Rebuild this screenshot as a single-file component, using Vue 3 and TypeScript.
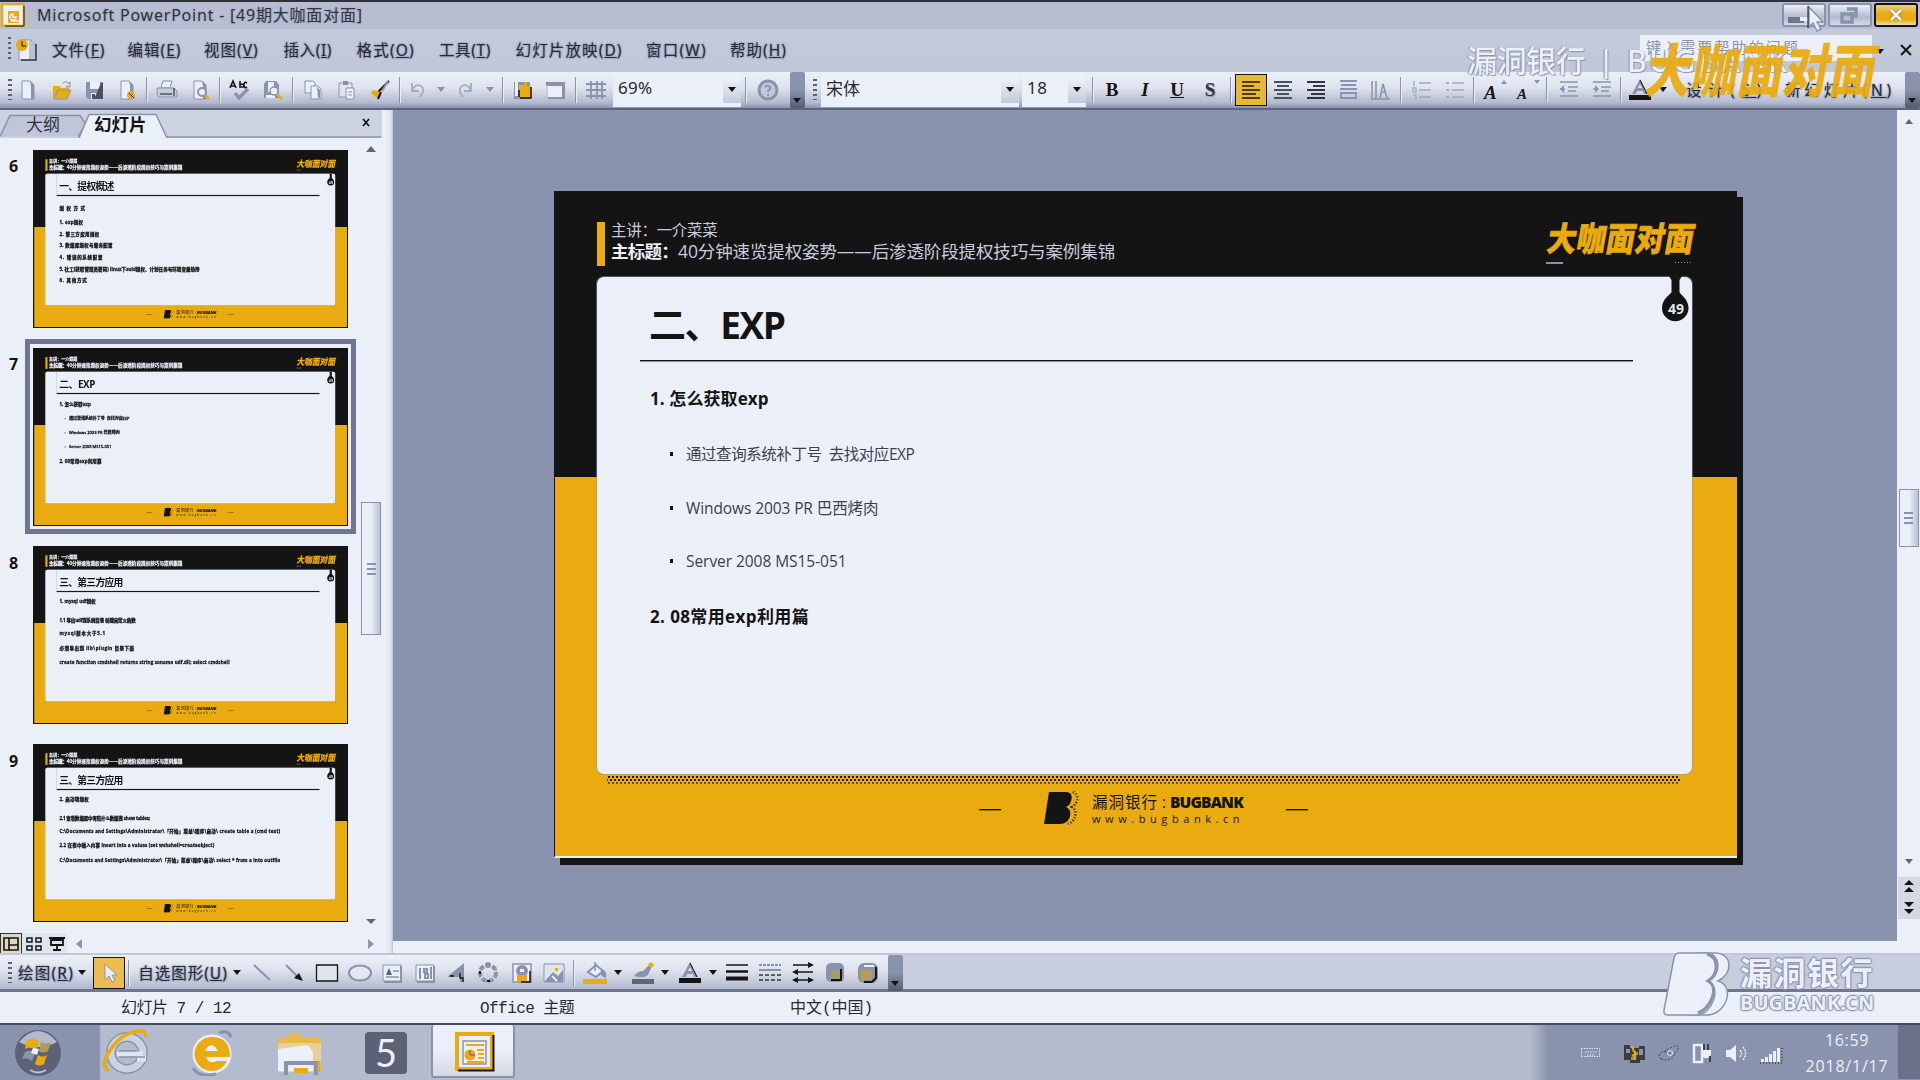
<script setup lang="ts">
import { defineComponent, h, onMounted } from 'vue'

interface Line { y: number; text: string; w: number; bold?: boolean; bullet?: boolean }
interface SlideData { no: number; title: string; tw: number; lines: Line[] }
interface Tool { c: number; w: number; icon?: string; kind?: string; text?: string; key?: string; on?: boolean }
interface Placed extends Tool { gap: number }

const K = '#141414', G = '#8a93ad', W = '#ebf0f8', Y = '#e9ab10'

const slides: SlideData[] = [
  { no: 6, title: '一、提权概述', tw: 206, lines: [
    { y: 218, text: '提权方式', w: 106, bold: true },
    { y: 271, text: '1. exp提权', w: 90, bold: true },
    { y: 315, text: '2. 第三方应用提权', w: 152, bold: true },
    { y: 358, text: '3. 数据库提权与服务配置', w: 202, bold: true },
    { y: 403, text: '4. 错误的系统配置', w: 166, bold: true },
    { y: 447, text: '5. 社工(获取管理员密码) linux下suid提权、计划任务与环境变量劫持', w: 530, bold: true },
    { y: 490, text: '6. 其他方式', w: 106, bold: true }] },
  { no: 7, title: '二、EXP', tw: 136, lines: [
    { y: 208, text: '1. 怎么获取exp', w: 119, bold: true },
    { y: 263, text: '通过查询系统补丁号  去找对应EXP', w: 228, bullet: true },
    { y: 317, text: 'Windows 2003 PR 巴西烤肉', w: 192, bullet: true },
    { y: 370, text: 'Server 2008 MS15-051', w: 161, bullet: true },
    { y: 426, text: '2. 08常用exp利用篇', w: 159, bold: true }] },
  { no: 8, title: '三、第三方应用', tw: 240, lines: [
    { y: 207, text: '1. mysql udf提权', w: 138, bold: true },
    { y: 276, text: '1.1 导出udf到系统目录 创建自定义函数', w: 288, bold: true },
    { y: 328, text: 'mysql版本大于5.1', w: 175, bold: true },
    { y: 382, text: '必须导出到 lib\\plugin 目录下面', w: 284, bold: true },
    { y: 435, text: 'create function cmdshell returns string soname udf.dll; select cmdshell', w: 643, bold: true }] },
  { no: 9, title: '三、第三方应用', tw: 240, lines: [
    { y: 205, text: '2. 启动项提权', w: 112, bold: true },
    { y: 276, text: '2.1 查看数据库中有些什么数据表 show tables;', w: 342, bold: true },
    { y: 327, text: 'C:\\Documents and Settings\\Administrator\\「开始」菜单\\程序\\启动\\ create table a (cmd text)', w: 835, bold: true },
    { y: 381, text: '2.2 在表中插入内容 insert into a values (set wshshell=createobject)', w: 586, bold: true },
    { y: 435, text: 'C:\\Documents and Settings\\Administrator\\「开始」菜单\\程序\\启动\\ select * from a into outfile', w: 835, bold: true }] }
]

const Slide = defineComponent({
  props: { data: { type: Object as () => SlideData, required: true } },
  setup(p) {
    const t = (cls: string, w: number, s: string) => h('span', { class: cls, 'data-w': w }, s)
    return () => {
      let prev = 170
      return h('div', { class: 'slide' }, [
        h('div', { class: 's-head' }, [
          h('i', { class: 's-mark' }),
          h('div', { class: 's-info' }, [
            h('div', { class: 's-l1' }, [t('fit', 107, '主讲：一介菜菜')]),
            h('div', { class: 's-l2' }, [t('fit b', 67, '主标题：'), t('fit', 437, '40分钟速览提权姿势——后渗透阶段提权技巧与案例集锦')])
          ]),
          h('div', { class: 's-logo' }, [
            h('div', { class: 's-logot' }, [t('fit', 147, '大咖面对面')]),
            h('div', { class: 's-logou' }, [h('i'), h('i')])
          ])
        ]),
        h('div', { class: 's-panel' }, [
          h('div', { class: 's-title' }, [t('fit', p.data.tw, p.data.title)]),
          h('div', { class: 's-lines' }, p.data.lines.map((l) => {
            const m = l.y - prev - 24
            prev = l.y
            return h('div', { class: ['s-line', { b: l.bold, bu: l.bullet }], style: { marginTop: m + 'px' } }, [t('fit', l.w, l.text)])
          })),
          h('div', { class: 's-drop' }, [
            h('svg', { width: 32, height: 48, viewBox: '0 0 32 48' }, [
              h('path', { d: 'M10 0h13l-2.500 4v12c1 3 9 7 9 16a13.200 13.200 0 0 1-26.500 0c0-9 8-13 9.500-16V4z', fill: K })
            ]), h('span', '49')
          ])
        ]),
        h('div', { class: 's-foot' }, [
          h('i', { class: 's-dash' }),
          h('svg', { width: 40, height: 34, viewBox: '0 0 40 34' }, [
            h('path', { d: 'M6 1h17c5 0 7 4 5 9-1 4-3 5-5 6 4 2 5 5 4 9-1 5-5 8-10 8H1z', fill: K }),
            h('path', { d: 'M30 1c6 3 6 10-1 15 6 4 4 14-4 17', fill: 'none', stroke: K, 'stroke-width': 2.5, 'stroke-dasharray': '1 2' })
          ]),
          h('div', { class: 's-brand' }, [
            h('div', { class: 's-b1' }, [t('fit', 66, '漏洞银行'), h('em', ':'), t('fit b', 73, 'BUGBANK')]),
            h('div', { class: 's-b2' }, [t('fit', 152, 'www.bugbank.cn')])
          ]),
          h('i', { class: 's-dash' })
        ])
      ])
    }
  }
})

const page = `<path d="M6 3h8l4 4v14H6z" fill="${W}" stroke="${G}"/><path d="M14 3l4 4v14h-3V8z" fill="${G}"/>`
const icons: Record<string, string> = {
  new: page,
  open: `<path d="M3 8h6l2 2h8v3H8l-4 8H3z" fill="${Y}"/><path d="M8 12h13l-4 9H4z" fill="${Y}" stroke="${G}"/><path d="M13 5q4-3 6 1l1-2v5h-4l2-2" fill="none" stroke="${G}"/>`,
  save: `<path d="M3 4h17v17H5l-2-2z" fill="${G}"/><path d="M7 4h10v7H7z" fill="${W}"/><path d="M8 15h8v6H8z" fill="${W}"/><path d="M9 16h3v5H9zM18 5h2v16h-9z" fill="#4a5064"/>`,
  perm: page + `<circle cx="16" cy="17" r="4" fill="${Y}"/><path d="M14 15l5 5" stroke="${K}"/>`,
  print: `<path d="M8 3h9l-2 7H6z" fill="${W}" stroke="${G}"/><path d="M2 10h17l3 3v6H4l-2-3z" fill="#c6ccdb" stroke="${G}"/><path d="M5 16h12M19 10v8" stroke="${K}"/>`,
  preview: page + `<circle cx="14" cy="14" r="4" fill="${W}" stroke="${G}" stroke-width="2"/><path d="M17 17l4 4" stroke="${Y}" stroke-width="2.500"/>`,
  spell: `<path d="M2 10l3-7 3 7M3 8h4M12 3v6h3q3-3-3-3M19 5q-3-2-3 2t3 2" fill="none" stroke="${K}" stroke-width="1.600"/><path d="M7 15l4 5 9-9" fill="none" stroke="${G}" stroke-width="3.500"/>`,
  research: `<path d="M5 3h10l3 4v13H3V6z" fill="${G}"/><path d="M7 4h6v10H7zM5 17h9v3H5z" fill="${W}"/><circle cx="13" cy="13" r="4" fill="${W}" stroke="${G}" stroke-width="1.500"/><path d="M16 16l5 5" stroke="${Y}" stroke-width="2.500"/>`,
  copy: `<path d="M4 3h8l2 2v10H4z" fill="${W}" stroke="${G}"/><path d="M10 8h7l3 3v10H10z" fill="${W}" stroke="${G}"/><path d="M16 9l3 3v8h-2z" fill="${G}"/>`,
  paste: `<path d="M4 5h13v14H4z" fill="#dfe4ee" stroke="${G}"/><path d="M8 3h5v4H8z" fill="${G}"/><path d="M11 10h8v11h-8z" fill="${W}" stroke="${G}"/><path d="M13 14h4M13 17h4" stroke="${G}"/>`,
  brush: `<path d="M21 3L10 14" stroke="${K}" stroke-width="2"/><path d="M20 3l-6 10" stroke="${G}" stroke-width="2"/><path d="M5 12l8 2-3 6-4-2-3-3z" fill="${Y}"/><path d="M13 14l-3 7" stroke="${K}" stroke-width="2"/>`,
  undo: `<path d="M6 5v8h7M6 13q3-8 9-5 5 4-1 11" fill="none" stroke="#a3abc1" stroke-width="1.800"/>`,
  redo: `<path d="M18 5v8h-7M18 13q-3-8-9-5-5 4 1 11" fill="none" stroke="#a3abc1" stroke-width="1.800"/>`,
  chart: `<path d="M3 4h16v17H3z" fill="${G}"/><path d="M4 4h3v14H4z" fill="${W}"/><path d="M8 7h5V4h3v4h4v11H8z" fill="${Y}"/><path d="M8 12v7M9 20h11V9" stroke="${K}" stroke-width="1.500" fill="none"/>`,
  table: `<path d="M4 6h16v14H4z" fill="${W}"/><path d="M2 4h18v4H2zM18 4h3v17h-3zM4 19h17v2H4z" fill="${G}"/><path d="M3 7v13" stroke="#b9c0d2"/>`,
  grid: `<path d="M2 6h20M2 12h20M2 18h20M7 3v18M13 3v18M18 3v18" stroke="${G}" stroke-width="1.800"/>`,
  help: `<circle cx="12" cy="12" r="9" fill="#c3c9d8" stroke="${G}" stroke-width="3"/><path d="M9 9q3-3 5 0 1 2-2 4v1M12 16v2" fill="none" stroke="${G}" stroke-width="2"/>`,
  left: `<path d="M3 5h18M3 9h12M3 13h18M3 17h14M3 21h18" stroke="${K}" stroke-width="1.700" transform="translate(0 -1)"/>`,
  center: `<path d="M3 4h18M6 8h12M3 12h18M6 16h12M3 20h18" stroke="#4a5064" stroke-width="2"/>`,
  right: `<path d="M3 4h18M9 8h12M3 12h18M7 16h14M3 20h18" stroke="#30343f" stroke-width="2"/>`,
  dist: `<path d="M3 3h17M4 7h15M3 11h17M4 15h15v5H4z" fill="none" stroke="${G}" stroke-width="1.800"/>`,
  vert: `<path d="M4 3v17M8 3v17M12 20l3-14 4 14M13 14h5M3 21h19" fill="none" stroke="${G}" stroke-width="1.500"/>`,
  num: `<path d="M9 5h12M9 12h12M9 19h12M4 3v5M3 10h3v4H3zM3 17h3v4" fill="none" stroke="#a3abc1" stroke-width="1.300"/>`,
  bul: `<path d="M9 5h12M9 12h12M9 19h12" stroke="#a3abc1" stroke-width="1.400"/><path d="M3 4h3v2H3zM3 11h3v2H3zM3 18h3v2H3z" fill="#a3abc1"/>`,
  big: `<path d="M20 4l3 4h-6z" fill="${G}"/>`,
  small: `<path d="M17 4h6l-3 4z" fill="${G}"/>`,
  indent: `<path d="M3 4h18M11 9h10M11 13h8M3 18h18M3 11h5" stroke="${G}" stroke-width="1.700"/><path d="M7 7l-4 4 4 4z" fill="${G}"/>`,
  outdent: `<path d="M3 4h18M11 9h10M11 13h8M3 18h18M3 11h5" stroke="${G}" stroke-width="1.700"/><path d="M5 7l4 4-4 4z" fill="${G}"/>`,
  fcol: `<path d="M4 16L12 1l8 15h-4l-1-3H9l-1 3zM10 10h4l-2-4z" fill="${G}"/><path d="M12 2l7 14" stroke="${K}"/><path d="M1 17h22v5H1z" fill="${K}"/>`,
  cursor: `<path d="M8 3v16l4-4 3 6 3-1-3-6h5z" fill="${W}" stroke="${G}"/>`,
  line: `<path d="M4 4l16 15" stroke="${G}" stroke-width="2"/>`,
  arrow: `<path d="M4 4l11 11" stroke="${G}" stroke-width="2"/><path d="M21 20l-9-3 5-5z" fill="${K}"/>`,
  rect: `<path d="M1.500 4h21v16h-21z" fill="#dfe4ee" stroke="${K}" stroke-width="1.300"/>`,
  oval: `<ellipse cx="12" cy="12" rx="11" ry="7.500" fill="#e3e7f0" stroke="${G}" stroke-width="2"/>`,
  tbox: `<path d="M3 4h18v16H3z" fill="${W}" stroke="${G}"/><path d="M21 5v16H4" fill="none" stroke="${G}" stroke-width="2"/><path d="M6 14l3-7 3 7z" fill="#5a6076"/><path d="M13 10h6M6 16h13" stroke="${G}" stroke-width="1.700"/>`,
  vbox: `<path d="M3 4h18v16H3z" fill="${W}" stroke="${G}"/><path d="M21 5v16H4" fill="none" stroke="${G}" stroke-width="2"/><path d="M7 7v11M11 8h3v3h-3zM12 13h3v4h-3zM18 6v12" fill="none" stroke="${G}" stroke-width="2"/>`,
  wart: `<path d="M1 16L18 2v19h-4v-5H8z" fill="${G}"/><path d="M4 15h4M14 12v5h3v4" stroke="${K}" stroke-width="1.300" fill="none"/>`,
  diag: `<circle cx="12" cy="12" r="8" fill="none" stroke="${G}" stroke-width="4" stroke-dasharray="5 2"/><circle cx="12" cy="4" r="3" fill="${G}"/><path d="M11 20h3M4 10v3" stroke="${K}" stroke-width="2"/><path d="M18 8h3v2h-3z" fill="${Y}"/>`,
  clip: `<path d="M3 3h18v18H3z" fill="${W}" stroke="${G}" stroke-width="1.500"/><circle cx="12" cy="10" r="6" fill="${G}"/><path d="M7 14h10v6H7z" fill="${Y}"/><path d="M10 8h4v3h-4z" fill="${W}"/><path d="M20 10v11h-9" stroke="${K}" fill="none" stroke-width="1.500"/>`,
  pic: `<path d="M2 3h20v18H2z" fill="#dfe4ee" stroke="${G}"/><path d="M3 20l8-9 5 4 5-6v12H3z" fill="${G}"/><path d="M13 7h3v3h-3z" fill="${Y}"/><path d="M10 15l5 5" stroke="${W}" stroke-width="2"/>`,
  fill: `<path d="M5 11l8-7 7 6-7 6z" fill="${W}" stroke="${G}" stroke-width="2"/><path d="M12 1v9M19 9q5 3 3 7l-4-3z" stroke="${G}" fill="${G}" stroke-width="1.500"/><path d="M0 18h24v5H0z" fill="${Y}"/>`,
  lcol: `<path d="M3 15q4-5 9-5l7-7 2 2-4 9q-5 4-14 1z" fill="${G}"/><circle cx="20" cy="4" r="2.500" fill="${Y}"/><path d="M1 18h22v5H1z" fill="#5f667c"/>`,
  lw: `<path d="M1 4h22" stroke="${K}" stroke-width="1.500"/><path d="M1 10.500h22" stroke="${K}" stroke-width="2.500"/><path d="M1 17.500h22" stroke="${K}" stroke-width="4"/>`,
  dash: `<path d="M1 4h22" stroke="${G}" stroke-width="2" stroke-dasharray="3 1"/><path d="M1 9h22" stroke="${G}" stroke-width="2"/><path d="M1 14h22M1 19h22" stroke="#30343f" stroke-width="1.600" stroke-dasharray="4 2"/>`,
  arrs: `<path d="M2 4h18M4 11h18M4 19h17" stroke="${K}" stroke-width="1.600"/><path d="M17 1l6 3-6 3zM7 8l-6 3 6 3zM7 16l-6 3 6 3zM17 16l6 3-6 3z" fill="${K}"/>`,
  shad: `<rect x="3" y="2" width="18" height="19" rx="5" fill="${G}"/><path d="M8 9h9v9H8z" fill="#a59a70"/><path d="M18 8v11H8" fill="none" stroke="${K}" stroke-width="2"/>`,
  cube: `<rect x="2" y="2" width="20" height="20" rx="6" fill="${G}"/><path d="M4 9h12v10H4z" fill="#b59b55"/><path d="M20 6v11l-4 4H8" fill="none" stroke="${K}" stroke-width="2"/><path d="M8 5h10" stroke="${W}" stroke-width="2"/>`
}

function place(list: Tool[]): Placed[] {
  let end = 0
  return list.map((t) => {
    const gap = t.c - t.w / 2 - end
    end = t.c + t.w / 2
    return { ...t, gap }
  })
}
const ic = (c: number, icon: string, on = false): Tool => ({ c, w: on ? 32 : 24, icon, on })
const sp = (c: number): Tool => ({ c, w: 2, kind: 'sep' })
const ar = (c: number, dim = false): Tool => ({ c, w: 9, kind: dim ? 'arr dim' : 'arr' })
const grip = (c: number): Tool => ({ c, w: 4, kind: 'grip' })
const over = (c: number): Tool => ({ c, w: 15, kind: 'over' })

const toolbar = place([
  grip(10), ic(28, 'new'), ic(62, 'open'), ic(95, 'save'), ic(127, 'perm'), sp(147), ic(167, 'print'), ic(200, 'preview'), sp(220),
  ic(240, 'spell'), ic(273, 'research'), sp(293), ic(313, 'copy'), ic(347, 'paste'), ic(380, 'brush'), sp(400),
  ic(418, 'undo'), ar(441, true), ic(465, 'redo'), ar(490, true), sp(503), ic(523, 'chart'), ic(556, 'table'), sp(576), ic(596, 'grid'),
  { c: 677, w: 128, kind: 'combo', text: '69%', key: '35' }, sp(746), ic(768, 'help'), over(797), grip(815),
  { c: 920, w: 198, kind: 'combo', text: '宋体', key: '34' }, { c: 1054, w: 64, kind: 'combo', text: '18', key: '20' }, sp(1093),
  { c: 1112, w: 20, kind: 'txt fb', text: 'B' }, { c: 1145, w: 20, kind: 'txt fi', text: 'I' },
  { c: 1177, w: 20, kind: 'txt fu', text: 'U' }, { c: 1210, w: 20, kind: 'txt fs', text: 'S' }, sp(1231),
  ic(1251, 'left', true), ic(1283, 'center'), ic(1316, 'right'), ic(1349, 'dist'), ic(1380, 'vert'), sp(1401), ic(1422, 'num'), ic(1455, 'bul'), sp(1474),
  { c: 1496, w: 24, kind: 'txt fa', text: 'A', icon: 'big' }, { c: 1529, w: 24, kind: 'txt fa sm', text: 'A', icon: 'small' }, sp(1547),
  ic(1569, 'indent'), ic(1602, 'outdent'), sp(1621), ic(1640, 'fcol'), ar(1663),
  { c: 1727, w: 84, kind: 'label', text: '设计', key: 'S' }, { c: 1840, w: 112, kind: 'label', text: '新幻灯片', key: 'N' }, over(1912)
])
const drawbar = place([
  grip(10), { c: 46, w: 58, kind: 'label', text: '绘图', key: 'R' }, ar(82), ic(109, 'cursor', true), sp(129),
  { c: 183, w: 92, kind: 'label', text: '自选图形', key: 'U' }, ar(237), ic(262, 'line'), ic(294, 'arrow'), ic(327, 'rect'), ic(360, 'oval'), ic(392, 'tbox'),
  ic(425, 'vbox'), ic(458, 'wart'), ic(488, 'diag'), ic(522, 'clip'), ic(554, 'pic'), sp(574), ic(595, 'fill'), ar(618), ic(643, 'lcol'), ar(665),
  ic(690, 'fcol'), ar(713), ic(737, 'lw'), ic(770, 'dash'), ic(803, 'arrs'), ic(835, 'shad'), ic(868, 'cube'), over(895)
])
const menus = place([
  { c: 79, w: 53, text: '文件', key: 'F' }, { c: 155, w: 54, text: '编辑', key: 'E' }, { c: 232, w: 55, text: '视图', key: 'V' },
  { c: 308.5, w: 49, text: '插入', key: 'I' }, { c: 386, w: 58, text: '格式', key: 'O' }, { c: 465.5, w: 52, text: '工具', key: 'T' },
  { c: 569.5, w: 107, text: '幻灯片放映', key: 'D' }, { c: 677, w: 61, text: '窗口', key: 'W' }, { c: 759, w: 57, text: '帮助', key: 'H' }
])

onMounted(() => {
  document.querySelectorAll<HTMLElement>('[data-w]').forEach((el) => {
    const n = Array.from(el.textContent || '').length
    const want = Number(el.dataset.w)
    el.style.letterSpacing = (want - el.offsetWidth) / n + 'px'
  })
})
</script>

<template>
  <div class="app">
    <header class="title">
      <svg width="24" height="24" viewBox="0 0 24 24"><path d="M1 1h22v22H1z" fill="#ebf0f8" stroke="#e9ab10" stroke-width="2.500" /><path d="M7 8h11v12H7z" fill="#e9ab10" /><path d="M5 5h13M10 18h9V7M12 11a3 3 0 1 0 3 3h-3z" fill="none" stroke="#ebf0f8" stroke-width="1.500" /><path d="M23 3v20H4" fill="none" stroke="#141414" /></svg>
      <span class="fit name" data-w="326">Microsoft PowerPoint - [49期大咖面对面]</span>
      <div class="wins">
        <div class="win"><svg width="42" height="22"><path d="M5 13h16v6H5z" fill="#6f7790" /><path d="M17 13h10v4H17z" fill="#ebf0f8" /></svg></div>
        <div class="win"><svg width="42" height="22"><path d="M18 5h9v7h-4M13 10h10v8H13z" fill="none" stroke="#8a93ad" stroke-width="3.500" /></svg></div>
        <div class="win close"><svg width="42" height="22"><path d="M16 6l10 10M26 6L16 16" stroke="#141414" stroke-width="4.500" opacity=".35" /><path d="M16 6l10 10M26 6L16 16" stroke="#ebf0f8" stroke-width="3" /></svg></div>
      </div>
    </header>

    <nav class="menu">
      <div class="docicon"><i class="grip"></i><svg width="24" height="26" viewBox="0 0 24 26"><path d="M5 3h12l4 4v16H5z" fill="#ebf0f8" stroke="#8a93ad" /><path d="M15 4h5v18h-5z" fill="#b9c0d2" /><circle cx="8" cy="8" r="6" fill="#e9ab10" /><path d="M8 4v5h4" stroke="#141414" fill="none" /><path d="M22 7v16H7" fill="none" stroke="#30343f" stroke-width="1.500" /></svg></div>
      <span v-for="(m, i) in menus" :key="m.key" class="mlabel" :style="{ marginLeft: (i ? m.gap : 16) + 'px', width: m.w + 'px' }"><span class="fit" :data-w="m.w">{{ m.text }}(<u>{{ m.key }}</u>)</span></span>
      <div class="ask"><span class="fit" data-w="154">键入需要帮助的问题</span></div>
      <i class="tri"></i>
      <svg class="mx" width="12" height="12"><path d="M1 1l10 10M11 1L1 11" stroke="#141414" stroke-width="2" /></svg>
    </nav>

    <div class="tools top">
      <div v-for="(t, i) in toolbar" :key="i" class="tool" :class="[t.kind, { on: t.on }]" :style="{ marginLeft: t.gap + 'px', width: t.w + 'px' }">
        <template v-if="t.kind === 'combo'"><span class="fit" :data-w="t.key">{{ t.text }}</span><b class="drop"><i class="tri"></i></b></template>
        <span v-else-if="t.kind === 'label'" class="fit" :data-w="t.w - 2">{{ t.text }}(<u>{{ t.key }}</u>)</span>
        <span v-else-if="t.text">{{ t.text }}</span>
        <svg v-if="t.icon" width="24" height="24" viewBox="0 0 24 24" v-html="icons[t.icon]"></svg>
      </div>
    </div>

    <main class="work">
      <aside class="pane">
        <div class="tabs">
          <svg class="tabshape" width="382" height="28"><path d="M0 26.500L10 5.500h70l6 9-8 12" fill="#bfc6d7" stroke="#8a93ad" stroke-width="1.500" /><path d="M79 28L89 4.500h67l11 23.500" fill="#ebf0f8" stroke="#8a93ad" stroke-width="1.500" /><path d="M167 27h214" stroke="#8a93ad" stroke-width="1.500" /></svg>
          <span class="t1">大纲</span><span class="t2">幻灯片</span>
          <svg class="tx" width="8" height="9"><path d="M1 1l6 7M7 1L1 8" stroke="#141414" stroke-width="1.700" /></svg>
        </div>
        <div class="list">
          <div class="thumbs">
            <div v-for="s in slides" :key="s.no" class="item">
              <b class="no">{{ s.no }}</b>
              <div class="frame" :class="{ sel: s.no === 7 }"><div class="clip"><Slide :data="s" /></div></div>
            </div>
          </div>
          <div class="vbar"><svg width="10" height="6"><path d="M0 6l5-6 5 6z" fill="#5f667c" /></svg><div class="thumb"><i></i><i></i><i></i></div><svg width="10" height="5"><path d="M0 0h10L5 5z" fill="#5f667c" /></svg></div>
        </div>
        <div class="views">
          <div class="vb act"><svg width="16" height="14"><path d="M1 1h14v12H1zM6 1v12M6 8h9" fill="none" stroke="#141414" stroke-width="1.600" /></svg></div>
          <div class="vb"><svg width="16" height="14"><path d="M1 1h5v4H1zM10 1h5v4h-5zM1 9h5v4H1zM10 9h5v4h-5z" fill="none" stroke="#141414" stroke-width="1.500" /></svg></div>
          <div class="vb last"><svg width="16" height="14"><path d="M0 1h16M2 3h12v5H2zM8 8v4M4 13h8" fill="none" stroke="#141414" stroke-width="1.800" /></svg></div>
          <svg class="ha" width="6" height="10"><path d="M6 0v10L0 5z" fill="#8a93ad" /></svg>
          <svg class="hb" width="6" height="10"><path d="M0 0v10l6-5z" fill="#8a93ad" /></svg>
        </div>
      </aside>
      <div class="split"></div>
      <section class="stage">
        <div class="canvas"><div class="shadow"><Slide :data="slides[1]" /></div></div>
        <div class="hstrip"></div>
      </section>
      <div class="sbar">
        <svg width="12" height="6"><path d="M2 6l4-5 4 5z" fill="#5f667c" /></svg>
        <div class="thumb"><i></i><i></i><i></i></div>
        <svg class="sd" width="12" height="6"><path d="M2 0h8L6 5z" fill="#5f667c" /></svg>
        <svg class="pg" width="12" height="36"><path d="M6 0l5 5H1zM6 7l5 5H1zM1 22h10l-5 5zM1 29h10l-5 5z" fill="#141414" /></svg>
      </div>
    </main>

    <div class="tools bottom">
      <div v-for="(t, i) in drawbar" :key="i" class="tool" :class="[t.kind, { on: t.on }]" :style="{ marginLeft: t.gap + 'px', width: t.w + 'px' }">
        <span v-if="t.kind === 'label'" class="fit" :data-w="t.w - 2">{{ t.text }}(<u>{{ t.key }}</u>)</span>
        <svg v-if="t.icon" width="24" height="24" viewBox="0 0 24 24" v-html="icons[t.icon]"></svg>
      </div>
    </div>

    <footer class="status">
      <span class="s1"><span class="fit" data-w="110">幻灯片 7 / 12</span></span>
      <span class="s2"><span class="fit" data-w="94">Office 主题</span></span>
      <span class="s3"><span class="fit" data-w="83">中文(中国)</span></span>
    </footer>

    <div class="taskbar">
      <svg class="start" width="50" height="50" viewBox="0 0 50 50"><circle cx="25" cy="25" r="23" fill="#5b6276" /><path d="M6 14Q25-8 44 14 25 24 6 14" fill="#b3bace" /><path d="M13 13q6-5 13 0l-3 9q-5-4-11-1z" fill="#e9ab10" /><path d="M28 14q5 3 10 0l-3 9q-5 3-9 0z" fill="#b39a5c" /><path d="M12 24q6-3 10 1l-3 8q-5-4-10-2z" fill="#8a93ad" /><path d="M20 20l6 1-2 6-6-2z" fill="#ebf0f8" /><path d="M25 27q5 3 9 0l-3 9q-5 3-9 0z" fill="#e9ab10" /><path d="M17 42q8 5 16 0" stroke="#b9c0d2" fill="none" stroke-width="2" /></svg>
      <svg class="ie1" width="50" height="48" viewBox="0 0 50 48"><circle cx="28" cy="25" r="16" fill="none" stroke="#8a93ad" stroke-width="10" /><circle cx="28" cy="25" r="16" fill="none" stroke="#ccd2e0" stroke-width="7" /><path d="M18 26h26M38 31h9" stroke="#dfe4ee" stroke-width="5" /><path d="M20 23h18M20 29h26" stroke="#8a93ad" stroke-width="1.500" /><path d="M10 43Q0 39 12 21T43 3q5 1 3 6" fill="none" stroke="#e9ab10" stroke-width="3.500" /></svg>
      <svg class="ie2" width="42" height="46" viewBox="0 0 42 46"><circle cx="21" cy="24" r="19.500" fill="#ebf0f8" /><path d="M21 7a17 17 0 1 0 15 24H26q-8 4-11-4h24Q39 7 21 7m-7 14q6-12 13 0z" fill="#e9ab10" /><path d="M2 38Q8 48 25 44M28 3q9-4 12 4" stroke="#8a93ad" stroke-width="3" fill="none" /></svg>
      <svg class="folder" width="48" height="46" viewBox="0 0 48 46"><path d="M2 6h11l2-3h9l2 4h19v34H2z" fill="#e6d09a" /><path d="M2 6h11l2-3h9l2 4h19v5H2z" fill="#e9ab10" opacity=".6" /><path d="M2 18l30-4 5 7v19H2z" fill="#ebf0f8" /><path d="M10 44V32h30v12" fill="none" stroke="#8a93ad" stroke-width="4" /><path d="M18 37h14v5H18z" fill="#e9ab10" /><path d="M43 30v11" stroke="#e9ab10" stroke-width="3" /></svg>
      <div class="sapp">5</div>
      <div class="active"><svg width="40" height="40" viewBox="0 0 40 40"><path d="M2 2h35v35H2z" fill="#ebf0f8" stroke="#e9ab10" stroke-width="4" /><path d="M38.500 3v35.500H3" fill="none" stroke="#141414" stroke-width="2" /><path d="M8 9h23v23H8z" fill="#ebf0f8" stroke="#8a93ad" stroke-width="1.500" /><path d="M11 13h18" stroke="#e9ab10" stroke-width="2" /><circle cx="15" cy="23" r="5.500" fill="#e9ab10" /><path d="M15 18v5h5" stroke="#5a6076" fill="none" /><path d="M22 18h7M23 22h6M23 26h6M12 30h17" stroke="#e9ab10" stroke-width="2" /></svg></div>
      <div class="tray">
        <svg class="tr1" width="20" height="10"><path d="M.5.5h18v8H.5zM4 4h12M6 7h8" fill="none" stroke="#dfe4ee" stroke-dasharray="1.500 1" /></svg>
        <svg class="tr2" width="23" height="20"><path d="M1 1h6v3h9V2h6v14h-5v3H7v-3H1z" fill="#3c3c3c" /><path d="M3 5h4v4H3zM16 5h4v6h-4zM8 13h4v3H8z" fill="#8a93ad" /><path d="M9 2l2 6M12 7v9M9 12l6-3" stroke="#e9ab10" stroke-width="2.200" /></svg>
        <svg class="tr3" width="22" height="18"><path d="M3 15q-5-5 4-8l7-4q7-4 6 2l-4 6q-3 7-13 4M7 8q6 0 5 4" fill="#8a93ad" stroke="#40465a" stroke-dasharray="2 1.500" /><circle cx="12" cy="9" r="2.500" fill="none" stroke="#dfe4ee" /></svg>
        <svg class="tr4" width="20" height="22"><path d="M2 3h8v17H2z" fill="none" stroke="#ebf0f8" stroke-width="2.500" /><path d="M9 8h10v5l-3 3h-4l-3-3z" fill="#ebf0f8" /><path d="M12 2v6M16 2v6M18 14v6" stroke="#141414" stroke-width="1.300" /></svg>
        <svg class="tr5" width="24" height="20"><path d="M1 6h4l6-5v17l-6-5H1z" fill="#ebf0f8" /><path d="M15 6q3 3 0 7M18 3q5 6 0 13" fill="none" stroke="#ebf0f8" stroke-width="1.500" stroke-dasharray="2 1" /></svg>
        <svg class="tr6" width="24" height="20"><path d="M2 15h3v3H2zM6 13h3v5H6zM10 10h3v8h-3zM14 7h3v11h-3zM18 4h3v14h-3z" fill="#ebf0f8" /><path d="M1 19h22V2" fill="none" stroke="#141414" stroke-dasharray="1 2" /></svg>
        <div class="clock"><div><span class="fit" data-w="44">16:59</span></div><div><span class="fit" data-w="83">2018/1/17</span></div></div>
        <div class="show"></div>
      </div>
    </div>

    <div class="wm1"><span class="fit" data-w="118">漏洞银行</span><span class="bar">|</span><span class="fit" data-w="162">BUGBANK</span></div>
    <div class="wm2"><span class="fit" data-w="230">大咖面对面</span></div>
    <div class="wm3">
      <svg width="72" height="66" viewBox="0 0 72 66"><path d="M36 2h18c17 1 17 21 2 28 18 5 8 34-11 34H28z" fill="#ebf0f8" stroke="#8a93ad" stroke-width="1.500" /><path d="M18 2h26c15 0 16 22 2 28 14 5 5 34-12 34H6q-5 0-4-5L12 7q1-5 6-5z" fill="#ebf0f8" stroke="#8a93ad" stroke-width="1.500" /><path d="M45 3c13 4 11 21 1 27 11 6 4 26-10 32" fill="none" stroke="#8a93ad" stroke-width="3" /></svg>
      <div class="wt"><div class="w1"><span class="fit" data-w="134">漏洞银行</span></div><div class="w2"><span class="fit" data-w="134">BUGBANK.CN</span></div></div>
    </div>
    <svg class="mouse" width="18" height="28" viewBox="0 0 18 28"><path d="M2 2v20l4-4 4 8 4-2-4-7h6z" fill="#ebf0f8" stroke="#8a93ad" stroke-width="1.500" /><path d="M1 1v22" stroke="#141414" /></svg>
  </div>
</template>

<style>
html, body { background: #8a93ad; overflow: hidden; }
.fit { display: inline-block; white-space: pre; }
.slide { width: 1183px; height: 667px; box-sizing: border-box; padding: 0 44px 0 43px; background: linear-gradient(#141414 286px, #e9ab10 286px); display: flex; flex-direction: column; font-family: "Open Sans", "Noto Sans CJK SC", sans-serif; position: relative; }
.slide::after { content: ""; position: absolute; inset: 286px 0 0 0; border: solid #141414; border-width: 0 0 0 1px; border-bottom: 2px solid #ebf0f8; }
.slide i { display: block; }
.s-head { height: 86px; display: flex; align-items: flex-start; flex: none; }
.s-mark { width: 8px; height: 44px; margin-top: 31px; background: #e9ab10; }
.s-info { margin: 30px 0 0 6px; color: #c6ccdc; flex: 1; white-space: nowrap; }
.s-l1 { font-size: 15.500px; line-height: 19px; height: 20px; }
.s-l2 { font-size: 17.500px; line-height: 21px; height: 21px; }
.s-l2 .b { font-weight: 700; color: #ebf0f8; }
.s-logo { width: 150px; margin-top: 28px; }
.s-logot { transform: skewX(-10deg) scaleY(1.15); transform-origin: 50% 50%; font: 900 29px/34px "Noto Sans CJK SC", sans-serif; color: #e9ab10; -webkit-text-stroke: .6px #e9ab10; height: 38px; padding-left: 5px; white-space: nowrap; }
.s-logou { display: flex; justify-content: space-between; margin-top: 5px; padding: 0 1px 0 3px; }
.s-logou i { width: 17px; height: 2px; background: #8a93ad; }
.s-logou i + i { height: 1px; background: repeating-linear-gradient(90deg, #8a93ad 0 1px, transparent 1px 3px); }
.s-panel { height: 497px; width: 1095px; box-sizing: border-box; flex: none; border-radius: 7px; background: #ebf0f8; position: relative; box-shadow: 0 0 0 1px rgba(138,147,173,.5); color: #141414; z-index: 1; }
.s-title { height: 84px; margin: 0 59px 0 43px; padding: 0 0 0 9px; border-bottom: 1.500px solid #141414; box-shadow: 0 1px 0 #8a93ad; box-sizing: border-box; font-size: 37px; font-weight: 700; line-height: 95px; white-space: nowrap; overflow: visible; }
.s-lines { padding-left: 53px; padding-top: 12px; }
.s-line { height: 24px; line-height: 24px; font-size: 15.500px; color: #3a4052; white-space: nowrap; }
.s-line.b { font-weight: 700; font-size: 17px; color: #141414; }
.s-line.bu { padding-left: 36px; position: relative; }
.s-line.bu::before { content: ""; position: absolute; left: 20px; top: 10px; width: 3px; height: 4px; background: #141414; }
.s-drop { position: absolute; right: 1px; top: -1px; width: 32px; height: 48px; }
.s-drop span { position: absolute; left: 2px; width: 30px; text-align: center; top: 23px; font: 700 14px/20px "Open Sans", sans-serif; color: #dfe4ee; }
.s-foot { flex: 1; margin: 0 13px 0 10px; padding-top: 17px; display: flex; align-items: flex-start; justify-content: center; color: #141414; background: radial-gradient(circle, #141414 .7px, transparent 1px) 0 1px / 4px 4px repeat-x, radial-gradient(circle, #141414 .7px, transparent 1px) 2px 4px / 4px 4px repeat-x, radial-gradient(circle, rgba(20,20,20,.6) .7px, transparent 1px) 0 7px / 4px 4px repeat-x; }
.s-dash { width: 22px; height: 1px; background: #141414; margin: 18px 42px 0; box-shadow: 0 1px 0 rgba(20,20,20,.4); }
.s-brand { width: 152px; margin-left: 9px; white-space: nowrap; }
.s-b1 { font-size: 15.500px; height: 22px; line-height: 23px; }
.s-b1 em { font-style: normal; display: inline-block; width: 12px; text-align: center; }
.s-b1 .b { font-weight: 800; }
.s-b2 { font-size: 11px; line-height: 12px; height: 12px; }
</style>

<style scoped>
.app { width: 1920px; height: 1080px; position: relative; overflow: hidden; display: flex; flex-direction: column; background: #8a93ad; font-family: "Noto Sans", "Noto Sans CJK SC", sans-serif; color: #141414; }
svg { display: block; }
.title { height: 29px; flex: none; box-sizing: border-box; border-top: 2px solid #30303a; background: #b7bed1; display: flex; align-items: flex-start; padding: 1px 2px 0 1px; }
.name { font-size: 16px; line-height: 24px; margin-left: 12px; color: #30343f; text-shadow: 0 0 2px #8a93ad; }
.wins { margin-left: auto; display: flex; gap: 2px; }
.win { width: 44px; height: 24px; box-sizing: border-box; border: 2px solid #8a93ad; border-radius: 3px; background: linear-gradient(#ebf0f8, #b3bace 60%, #d5dae6); }
.win svg { margin: -1px; }
.win.close { border-color: #141414; background: linear-gradient(#ebcf85, #e9ab10 45%, #e9ab10 75%, #ebe0bc); }
.menu { height: 43px; flex: none; background: linear-gradient(#c3cadb, #c0c7d8); display: flex; align-items: flex-start; }
.docicon { width: 36px; display: flex; gap: 3px; padding: 8px 0 0 8px; box-sizing: border-box; }
.docicon svg { flex: none; }
.grip { display: block; width: 3px; height: 22px; flex: none; background: repeating-linear-gradient(#5a6076 0 2px, transparent 2px 5px); }
.mlabel { font-size: 15.500px; line-height: 24px; margin-top: 9px; color: #262a35; white-space: nowrap; text-shadow: 0 0 2px #8a93ad, 0 0 2px #8a93ad; flex: none; }
.ask { margin-left: 853px; margin-top: 6px; width: 232px; height: 26px; box-sizing: border-box; flex: none; background: #ebf0f8; color: #8a93ad; font-size: 15px; line-height: 25px; padding-left: 6px; }
.tri { display: block; width: 0; height: 0; border: 4.500px solid transparent; border-top: 5px solid #141414; border-bottom: 0; }
.menu > .tri { margin: 20px 0 0 4px; }
.mx { margin: 15px 0 0 16px; flex: none; }
.tools { display: flex; align-items: center; box-sizing: border-box; flex: none; }
.tools.top { height: 38px; padding-bottom: 1px; border-bottom: 2px solid #5f667c; background: linear-gradient(#ebf0f8 0, #dde2ed 45%, #b3bace 85%, #8a93ad); }
.tools.bottom { height: 39px; padding-top: 1px; border-top: 2px solid #c0c6d6; border-bottom: 3px solid #6f7790; background: linear-gradient(90deg, transparent 903px, #c8cedd 903px), linear-gradient(#ebf0f8, #dde2ed 45%, #b3bace); }
.tool { flex: none; height: 32px; display: flex; align-items: center; justify-content: center; white-space: nowrap; }
.tool.on { box-sizing: border-box; border: 1.500px solid #141414; background: #e9b839; }
.bottom .tool.on { background: #ebbd50; }
.tool.sep { height: 26px; background: linear-gradient(90deg, #8a93ad 50%, #ebf0f8 50%); }
.tool.arr::after { content: ""; border: 4.500px solid transparent; border-top: 5px solid #141414; border-bottom: 0; }
.tool.arr.dim::after { border-top-color: #8a93ad; }
.tool.grip { height: 21px; width: 3px; }
.tool.over { height: 36px; background: linear-gradient(#8a93ad 50%, #555b6d); align-items: flex-end; border-radius: 2px; }
.tool.over::after { content: ""; border: 4px solid transparent; border-top: 5px solid #141414; border-bottom: 0; margin-bottom: 5px; }
.tool.combo { height: 35px; background: #ebf0f8; box-sizing: border-box; padding: 0 0 4px 5px; justify-content: space-between; font-size: 17px; color: #262a35; }
.drop { width: 18px; height: 30px; display: flex; align-items: center; justify-content: center; padding-top: 4px; box-sizing: border-box; background: linear-gradient(#ebf0f8 20%, #c3cadb); }
.tool.label { font-size: 15.500px; color: #262a35; text-shadow: 0 0 2px #8a93ad, 0 0 2px #8a93ad; }
.tool.txt { font-family: "Liberation Serif", serif; font-weight: 700; font-size: 19px; }
.tool.fi { font-style: italic; }
.tool.fu { text-decoration: underline; }
.tool.fs { color: #30343f; text-shadow: 1px 1px 1px #8a93ad; }
.tool.fa { position: relative; justify-content: flex-start; padding-top: 6px; box-sizing: border-box; font-style: italic; }
.tool.fa.sm { font-size: 15px; padding-top: 10px; }
.tool.fa svg { position: absolute; left: 0; top: 2px; }
.work { height: 843px; flex: none; display: flex; }
.pane { width: 382px; background: #ebf0f8; display: flex; flex-direction: column; }
.tabs { height: 28px; position: relative; background: #ccd2e0; display: flex; align-items: flex-start; flex: none; }
.tabshape { position: absolute; left: 0; top: 0; }
.t1, .t2 { position: relative; font-size: 17px; line-height: 29px; white-space: nowrap; }
.t1 { margin-left: 26px; width: 68px; color: #30343f; }
.t2 { width: 80px; font-weight: 700; font-size: 17.500px; }
.tx { margin: 8px 0 0 188px; position: relative; }
.list { height: 795px; display: flex; flex: none; }
.thumbs { width: 360px; display: flex; flex-direction: column; gap: 3.300px; padding-top: 3px; box-sizing: border-box; }
.item { height: 195px; display: flex; align-items: flex-start; flex: none; }
.no { width: 25px; padding-left: 9px; box-sizing: border-box; font-size: 16px; line-height: 24px; margin-top: 13px; }
.frame { width: 331px; height: 195px; box-sizing: border-box; padding: 9.500px 9px; }
.frame.sel { border: 5px solid #6f7790; padding: 4.500px 4px; }
.clip { width: 313px; height: 176px; overflow: hidden; outline: 1px solid #141414; }
.clip :deep(.slide) { transform: scale(.2646); transform-origin: 0 0; }
.clip :deep(.s-line) { color: #141414; -webkit-text-stroke: 1px #141414; }
.clip :deep(.s-info) { -webkit-text-stroke: 1px #ebf0f8; color: #ebf0f8; }
.clip :deep(.s-title) { border-bottom-width: 4px; }
.vbar { width: 22px; display: flex; flex-direction: column; align-items: center; padding-top: 8px; box-sizing: border-box; }
.thumb { width: 20px; border: 1.500px solid #8a93ad; box-sizing: border-box; background: linear-gradient(90deg, #ebf0f8 50%, #b9c0d2); display: flex; flex-direction: column; align-items: center; justify-content: center; gap: 3px; }
.thumb i { width: 9px; height: 2px; background: #8a93ad; }
.vbar .thumb { height: 133px; margin: 350px 0 284px; flex: none; }
.views { height: 22px; display: flex; align-items: center; }
.vb { width: 24px; height: 22px; display: flex; align-items: center; justify-content: center; background: #dfe4ee; box-sizing: border-box; }
.vb:first-child { width: 22px; }
.vb.last { width: 21px; }
.vb.act { border: 1.500px solid #30343f; background: #dfd8c0; }
.ha { margin-left: 9px; }
.hb { margin-left: 286px; }
.split { width: 11px; background: linear-gradient(90deg, #ebf0f8 30%, #dfe4ee 80%, #b9c0d2); }
.stage { width: 1504px; display: flex; flex-direction: column; }
.canvas { height: 831px; background: #8a93ad; box-sizing: border-box; padding: 81px 0 0 161px; }
.shadow { width: 1189px; height: 674px; background: linear-gradient(90deg, #8a93ad 6px, #141414 6px) 0 100% / 100% 7px no-repeat, linear-gradient(#8a93ad 6px, #141414 6px) 100% 0 / 6px 100% no-repeat; }
.hstrip { flex: 1; background: #ebf0f8; }
.sbar { width: 23px; background: #ebf0f8; display: flex; flex-direction: column; align-items: center; padding-top: 8px; box-sizing: border-box; }
.sbar .thumb { height: 58px; margin-top: 365px; flex: none; }
.sd { margin-top: 312px; }
.pg { background: #d3d8e4; padding: 3px 5px; margin-top: 12px; flex: none; }
.status { height: 33px; flex: none; background: #ebf0f8; border-bottom: 2px solid #454b5c; box-sizing: border-box; display: flex; font: 16px/35px "Liberation Mono", "Noto Sans CJK SC", monospace; color: #262a35; }
.s1 { width: 359px; margin-left: 121px; }
.s2 { width: 310px; }
.taskbar { flex: 1; display: flex; align-items: flex-start; background: linear-gradient(90deg, #8a93ad 99px, #b3bbce 101px, #b3bbce 1530px, #8a93ad 1548px); }
.start { margin: 3px 0 0 13px; }
.ie1 { margin: 3px 0 0 36px; }
.ie2 { margin: 5px 0 0 42px; }
.folder { margin: 6px 0 0 43px; }
.sapp { width: 42px; height: 42px; margin: 7px 0 0 41px; border-radius: 4px; background: #5b6276; color: #ebf0f8; font: 400 38px/41px "Lato", sans-serif; text-align: center; }
.active { margin-left: 24px; width: 84px; height: 53px; box-sizing: border-box; border: 2px solid #8a93ad; border-top: 0; border-radius: 3px; background: linear-gradient(#ebf0f8 45%, #d3d8e5); display: flex; justify-content: center; padding: 7px 0 0 3px; }
.tray { display: flex; margin-left: auto; height: 54px; }
.tr1 { margin: 23px 22px 0 0; } .tr2 { margin: 19px 12px 0 0; } .tr3 { margin: 19px 12px 0 0; } .tr4 { margin: 17px 13px 0 0; } .tr5 { margin: 19px 10px 0 0; } .tr6 { margin: 19px 13px 0 0; }
.clock { width: 102px; text-align: center; color: #ebf0f8; font: 16px/26px "Open Sans", sans-serif; padding-top: 2px; }
.show { width: 22px; background: #6a7188; }
.wm1 { position: absolute; left: 1467px; top: 41px; height: 40px; display: flex; font: 500 30px/40px "Noto Sans", "Noto Sans CJK SC", sans-serif; color: #ebf0f8; text-shadow: 1px 1px 1px #8a93ad, -1px 0 1px #8a93ad; }
.bar { width: 42px; text-align: center; }
.wm2 { position: absolute; left: 1648px; top: 32px; height: 70px; font: 900 46px/70px "Noto Sans CJK SC", sans-serif; color: #e9ab10; transform: skewX(-10deg) scaleY(1.25); opacity: .93; }
.wm3 { position: absolute; left: 1662px; top: 951px; display: flex; color: #ebf0f8; text-shadow: 1px 0 1px #8a93ad, -1px 0 1px #8a93ad, 0 1px 1px #8a93ad, 0 -1px 1px #8a93ad, 0 0 3px #8a93ad; }
.wt { margin-left: 6px; padding-top: 3px; white-space: nowrap; }
.w1 { font: 700 32px/34px "Noto Sans CJK SC", sans-serif; height: 37px; }
.w2 { font: 700 20px/22px "Noto Sans", sans-serif; height: 22px; margin-top: 1px; }
.mouse { position: absolute; left: 1807px; top: 5px; }
</style>
